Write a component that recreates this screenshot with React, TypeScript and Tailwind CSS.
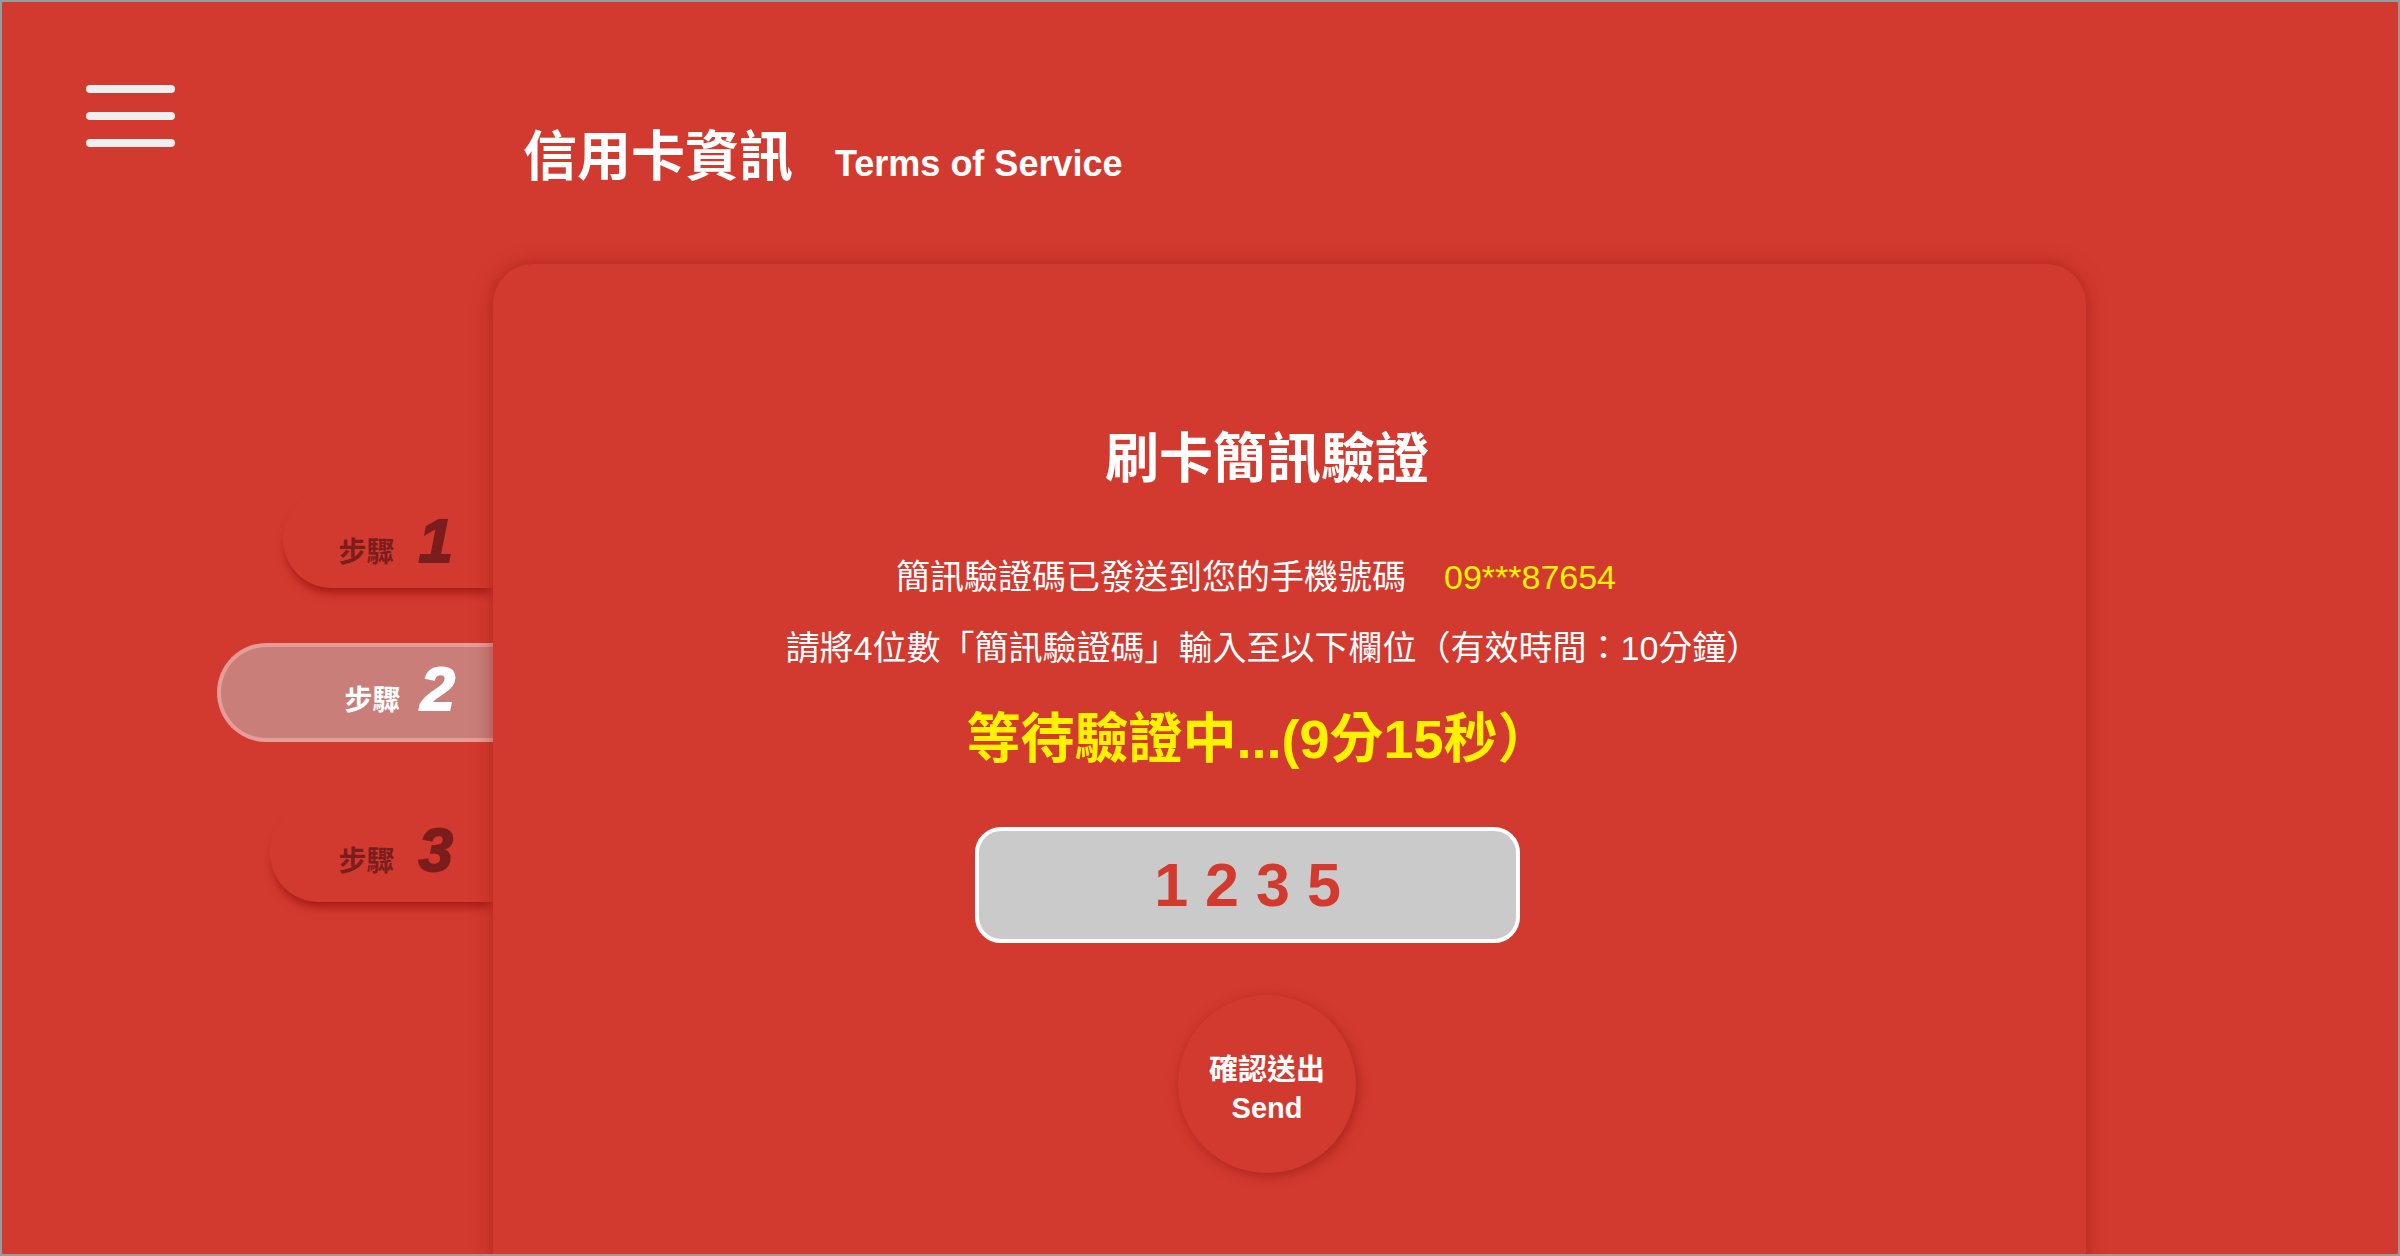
import React from 'react'

const steps = [
    { label: '步驟', num: '1', width: 'w-[210px]', mt: 'mt-[343px]', pt: 'pt-[20px]', active: false },
    { label: '步驟', num: '2', width: 'w-[276px]', mt: 'mt-[55px]', pt: 'pt-[11px]', active: true },
    { label: '步驟', num: '3', width: 'w-[223px]', mt: 'mt-[62px]', pt: 'pt-[15px]', active: false },
]

const StepTab = ({ label, num, width, mt, pt, active }: (typeof steps)[number]) => (
    <div
        className={
            active
                ? `${mt} ${width} ${pt} flex h-[99px] items-baseline justify-end gap-[20px] rounded-l-full border-4 border-r-0 border-[#e79d97] bg-[#c97e79] pr-[38px] text-white`
                : `${mt} ${width} ${pt} flex h-[98px] items-baseline justify-end gap-[24px] rounded-l-full bg-[#d33a2f] pr-[40px] text-[#7b1d1c] shadow-[0_8px_10px_-3px_rgba(150,18,12,0.75)]`
        }
    >
        <span className="text-[28px] font-bold">{label}</span>
        <span className="text-[62px] leading-none font-bold italic [-webkit-text-stroke:2px_currentColor]">
            {num}
        </span>
    </div>
)

const App = () => {
    return (
        <div className="flex h-[1256px] w-[2400px] overflow-hidden border-2 border-[#9a9a9a] bg-[#d33a2f] font-['Liberation_Sans','Noto_Sans_CJK_TC',sans-serif]">
            {/* sidebar */}
            <div className="flex w-[491px] shrink-0 flex-col items-end">
                <div className="ml-[84px] mt-[83px] flex flex-col gap-[19px] self-start">
                    <div className="h-[8px] w-[89px] rounded-full bg-[#efefef]"></div>
                    <div className="h-[8px] w-[89px] rounded-full bg-[#efefef]"></div>
                    <div className="h-[8px] w-[89px] rounded-full bg-[#efefef]"></div>
                </div>
                {steps.map((s) => (
                    <StepTab key={s.num} {...s} />
                ))}
            </div>

            {/* main */}
            <div className="relative z-10 flex flex-col">
                <div className="mt-[128px] flex h-[54px] shrink-0 items-baseline pl-[30px] text-white">
                    <h1 className="text-[54px] leading-none font-bold">信用卡資訊</h1>
                    <span className="ml-[42px] text-[36px] leading-none font-bold">Terms of Service</span>
                </div>

                <div className="mt-[80px] flex h-[1100px] w-[1593px] shrink-0 flex-col items-center rounded-[40px] bg-[#d33a2f] pr-[45px] pt-[168px] shadow-[0_0_18px_rgba(140,15,10,0.5)]">
                    <h2 className="text-[54px] leading-none font-bold text-white">刷卡簡訊驗證</h2>
                    <p className="mr-[22px] mt-[74px] text-[34px] leading-none text-white">
                        簡訊驗證碼已發送到您的手機號碼
                        <span className="ml-[38px] text-[#fff200]">09***87654</span>
                    </p>
                    <p className="ml-[12px] mt-[37px] text-[34px] leading-none text-white">
                        請將4位數「簡訊驗證碼」輸入至以下欄位（有效時間：10分鐘）
                    </p>
                    <p className="mr-[16px] mt-[47px] text-[54px] leading-none font-bold text-[#fff200]">
                        等待驗證中...(9分15秒）
                    </p>
                    <div className="mr-[39px] mt-[61px] flex h-[116px] w-[545px] shrink-0 items-center justify-center gap-[17px] rounded-[26px] border-4 border-white bg-[#c9cac9] text-[61px] leading-none font-bold text-[#d33a2f]">
                        <span>1</span>
                        <span>2</span>
                        <span>3</span>
                        <span>5</span>
                    </div>
                    <button className="mt-[52px] flex size-[178px] shrink-0 flex-col items-center justify-center rounded-full bg-[#d33a2f] pt-[10px] text-[29px] leading-[38px] font-bold text-white shadow-[2px_3px_12px_rgba(130,18,12,0.5)]">
                        <span>確認送出</span>
                        <span>Send</span>
                    </button>
                </div>
            </div>
        </div>
    )
}

export default App
